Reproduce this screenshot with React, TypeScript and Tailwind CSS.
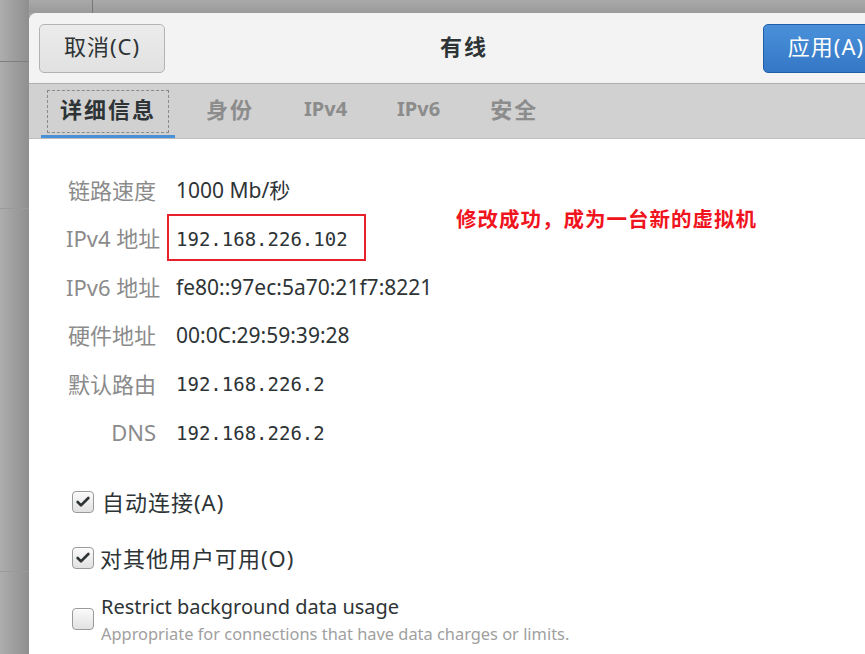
import { Check } from 'lucide-react';

const cjk = "font-['Noto_Sans','Noto_Sans_CJK_SC',sans-serif]";

const rows = [
  { label: '链路速度', value: '1000 Mb/秒', mono: false },
  { label: 'IPv4 地址', value: '192.168.226.102', mono: true, boxed: true },
  { label: 'IPv6 地址', value: 'fe80::97ec:5a70:21f7:8221', mono: false },
  { label: '硬件地址', value: '00:0C:29:59:39:28', mono: false },
  { label: '默认路由', value: '192.168.226.2', mono: true },
  { label: 'DNS', value: '192.168.226.2', mono: true },
];

const tabs = ['详细信息', '身份', 'IPv4', 'IPv6', '安全'];

const CheckBox = ({ checked }: { checked: boolean }) => (
  <span className="flex h-[22px] w-[22px] shrink-0 items-center justify-center rounded-[4px] border border-[#9a9a9a] bg-gradient-to-b from-[#fafafa] to-[#e2e2e2] shadow-[inset_0_1px_0_#fff]">
    {checked && <Check className="h-[16px] w-[16px] text-[#2e3436]" strokeWidth={4} />}
  </span>
);

export default function App() {
  return (
    <div className={`flex h-[654px] w-[865px] overflow-hidden bg-[#a7a7a7] ${cjk}`}>
      {/* desktop strip on the left */}
      <div className="flex w-[29px] shrink-0 flex-col bg-gradient-to-r from-[#adadad] to-[#8f8f8f]">
        <div className="h-[62px] border-b border-[#7e7e7e]" />
        <div className="h-[147px] border-b border-[#9a9a9a]" />
        <div className="h-[363px] border-b border-[#9a9a9a]" />
      </div>

      <div className="flex w-[870px] shrink-0 flex-col">
        <div className="h-[13px] shrink-0 bg-gradient-to-b from-[#a9a9a9] to-[#9a9a9a] pl-[63px]">
          <div className="h-full border-l border-[#777]" />
        </div>

        <div className="flex flex-1 flex-col overflow-hidden rounded-tl-[8px] bg-white">
          {/* header bar */}
          <div className="flex h-[71px] shrink-0 items-center justify-between border-b border-[#b0b0b0] bg-[#f3f3f3] px-[10px]">
            <button className="h-[49px] w-[126px] rounded-[5px] border border-[#b3b3b3] bg-gradient-to-b from-[#ececec] to-[#e1e1e1] pb-[3px] text-[22px] tracking-[1px] text-[#2e3436]">
              取消(C)
            </button>
            <div className="pb-[3px] text-[22px] font-bold tracking-[2px] text-[#2e3436]">有线</div>
            <button className="h-[49px] w-[126px] rounded-[5px] border border-[#1f5fa8] bg-gradient-to-b from-[#4a90d9] to-[#3478c6] pb-[3px] text-[22px] tracking-[1px] text-white">
              应用(A)
            </button>
          </div>

          {/* tabs */}
          <div className="flex h-[55px] shrink-0 items-stretch gap-[12px] border-b border-[#bdbdbd] bg-[#d1d1d1] pl-[12px]">
            {tabs.map((t, i) => (
              <div
                key={t}
                className={`relative flex items-center px-[19px] pb-[4px] font-bold ${
                  t.startsWith('IP') ? 'text-[20px]' : 'text-[22px] tracking-[2px]'
                } ${i === 0 ? 'text-[#2e3436]' : 'text-[#8c8c8c]'}`}
              >
                {i === 0 && (
                  <>
                    <span className="absolute left-[6px] right-[6px] top-[6px] bottom-[5px] border border-dashed border-[#8a8a8a]" />
                    <span className="absolute bottom-0 left-0 right-0 h-[3px] bg-[#4a90d9]" />
                  </>
                )}
                {t}
              </div>
            ))}
          </div>

          {/* details */}
          <div className="relative flex flex-col pt-[27px] pl-[37px]">
            {rows.map((r) => (
              <div key={r.label} className="flex h-[48.5px] items-center">
                <div className="w-[90px] whitespace-nowrap text-right text-[22px] text-[#8b8b8b]">{r.label}</div>
                <div
                  className={`relative ml-[20px] text-[#2e3436] ${
                    r.mono ? "font-['DejaVu_Sans_Mono',monospace] text-[19px]" : 'text-[21px]'
                  }`}
                >
                  {r.boxed && (
                    <span className="absolute -left-[9px] -top-[11px] h-[47px] w-[199px] border-2 border-[#e8202a]" />
                  )}
                  {r.value}
                </div>
              </div>
            ))}

            <div className="absolute left-[427px] top-[65px] text-[20.5px] font-bold tracking-[1px] text-[#f0141e]">
              修改成功，成为一台新的虚拟机
            </div>

            <div className="mt-[34px] flex flex-col pl-[6px]">
              <label className="flex h-[22px] items-center gap-[8px] text-[22px] tracking-[1px] text-[#2e3436]">
                <CheckBox checked />
                自动连接(A)
              </label>
              <label className="mt-[34px] flex h-[22px] items-center gap-[6px] text-[22px] tracking-[1px] text-[#2e3436]">
                <CheckBox checked />
                对其他用户可用(O)
              </label>
              <div className="mt-[24px] flex items-start gap-[7px]">
                <div className="pt-[15px]">
                  <CheckBox checked={false} />
                </div>
                <div className="flex flex-col">
                  <span className="text-[20px] leading-[27px] text-[#2e3436]">Restrict background data usage</span>
                  <span className="text-[16.4px] leading-[28px] text-[#a0a0a0]">
                    Appropriate for connections that have data charges or limits.
                  </span>
                </div>
              </div>
            </div>
          </div>
        </div>
      </div>
    </div>
  );
}
